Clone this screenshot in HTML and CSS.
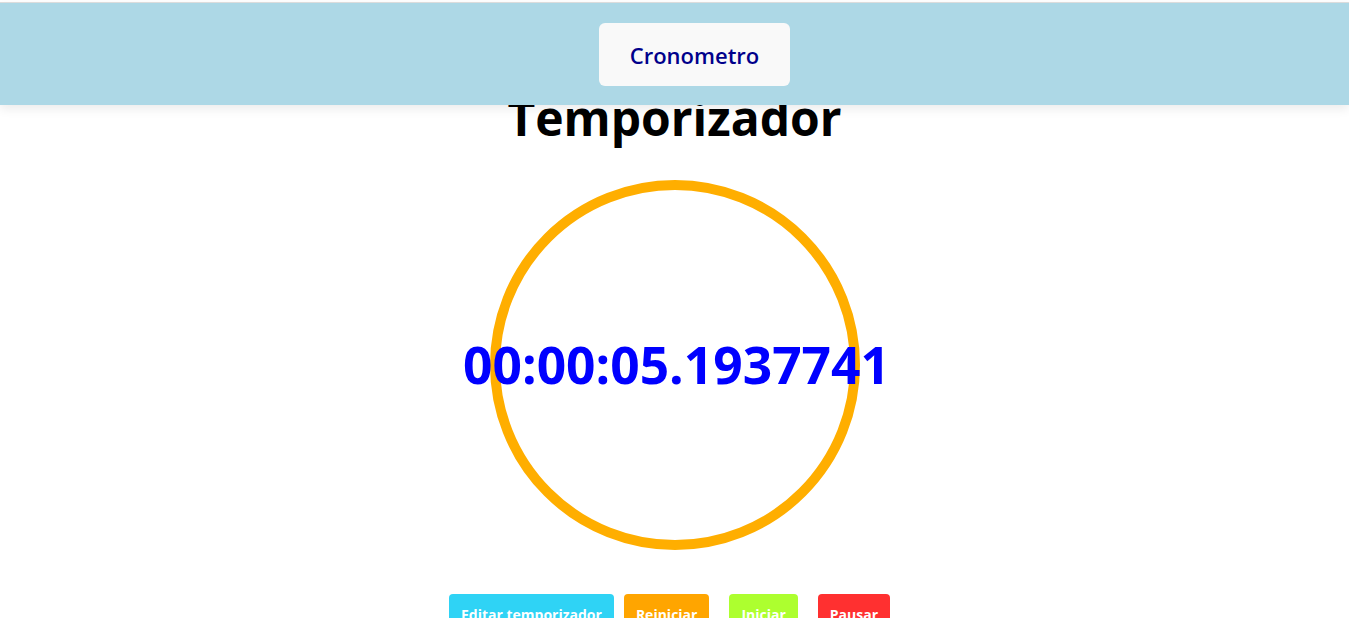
FILE: index.html
```html
<!DOCTYPE html>
<html lang="es">
<head>
<meta charset="utf-8">
<title>Temporizador</title>
<link rel="stylesheet" href="styles.css">
</head>
<body>
<header class="topbar">
  <button class="nav-btn">Cronometro</button>
</header>
<main class="page">
  <h1 class="title">Temporizador</h1>
  <div class="dial">
    <span class="time">00:00:05.1937741</span>
  </div>
  <div class="controls">
    <button class="ctl ctl-edit">Editar temporizador</button>
    <button class="ctl ctl-reset">Reiniciar</button>
    <button class="ctl ctl-start">Iniciar</button>
    <button class="ctl ctl-pause">Pausar</button>
  </div>
</main>
</body>
</html>
```
FILE: styles.css
```css
html, body {
  margin: 0;
  padding: 0;
  background: #ffffff;
  font-family: "Open Sans", "Noto Sans", "Liberation Sans", sans-serif;
  overflow: hidden;
}

.topbar {
  position: fixed;
  top: 2px;
  left: 0;
  right: 0;
  height: 103px;
  box-sizing: border-box;
  border-top: 1px solid #dcdcdc;
  background: #add8e6;
  display: flex;
  justify-content: center;
  align-items: flex-start;
  padding-top: 20px;
  padding-left: 40px;
  box-shadow: 0 4px 10px rgba(0, 0, 0, 0.08);
  z-index: 10;
}

.nav-btn {
  width: 191px;
  height: 63px;
  border: none;
  border-radius: 6px;
  background: #f9f9f9;
  color: #00008b;
  font-family: inherit;
  font-size: 22px;
  font-weight: 600;
  cursor: pointer;
}

.page {
  display: flex;
  flex-direction: column;
  align-items: center;
  padding-top: 87px;
}

.title {
  margin: 0;
  font-size: 48px;
  font-weight: 700;
  line-height: 62px;
  color: #000000;
}

.dial {
  margin-top: 31px;
  width: 350px;
  height: 350px;
  border: 10px solid #ffae00;
  border-radius: 50%;
  display: flex;
  justify-content: center;
  align-items: center;
}

.time {
  white-space: nowrap;
  color: #0000ff;
  font-size: 51.5px;
  font-weight: 700;
  line-height: 1;
  padding-left: 4px;
}

.controls {
  margin-top: 44px;
  display: flex;
  justify-content: center;
}

.ctl {
  border: none;
  border-radius: 4px;
  color: #ffffff;
  font-family: inherit;
  font-size: 14px;
  font-weight: 700;
  height: 40px;
  padding: 0 12px;
  cursor: pointer;
}

.ctl-edit { background: #2fd3f5; margin-right: 10px; }
.ctl-reset { background: #ffa500; margin-right: 20px; }
.ctl-start { background: #adff2f; margin-right: 20px; }
.ctl-pause { background: #ff3030; margin-right: 10px; }
```
